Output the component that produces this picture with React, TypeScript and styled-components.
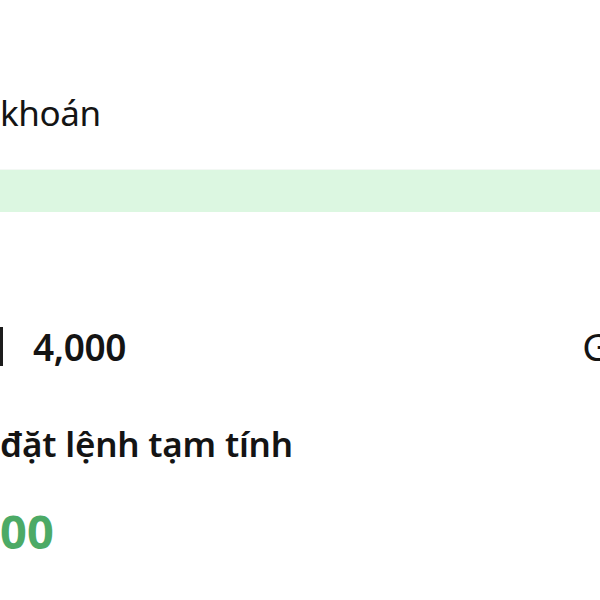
import React, { ReactElement } from 'react'
import styled, { createGlobalStyle } from 'styled-components'

const GlobalStyle = createGlobalStyle`
  body {
    margin: 0;
    overflow: hidden;
    background: #ffffff;
    font-family: 'Noto Sans', 'Open Sans', sans-serif;
    color: #141414;
  }
`
const Screen = styled.div`
  width: 600px;
  height: 600px;
  overflow: hidden;
  display: flex;
  flex-direction: column;
`
const AccountTitle = styled.h2`
  margin: 89px 0 0;
  font-size: 35px;
  font-weight: 400;
  line-height: 48px;
  letter-spacing: -0.4px;
  white-space: nowrap;
`
const Banner = styled.div`
  margin-top: 32px;
  height: 42px;
  background-color: #dcf7e1;
  border-top: 1px solid #f3f8f4;
`
const PriceRow = styled.div`
  display: flex;
  align-items: center;
  margin-top: 114px;
  height: 40px;
  white-space: nowrap;
`
const Divider = styled.span`
  display: block;
  width: 3px;
  height: 39px;
  margin-left: 0;
  background-color: #1c1c1c;
`
const PriceValue = styled.span`
  margin-left: 30px;
  font-size: 37px;
  font-weight: 600;
  letter-spacing: -0.4px;
`
const PriceLabel = styled.span`
  margin-left: auto;
  margin-right: -41px;
  font-size: 38px;
  font-weight: 400;
`
const SectionTitle = styled.h3`
  margin: 54px 0 0;
  font-size: 35px;
  font-weight: 600;
  line-height: 48px;
  letter-spacing: -0.2px;
  white-space: nowrap;
`
const Amount = styled.div`
  margin-top: 35px;
  font-size: 47px;
  font-weight: 700;
  line-height: 56px;
  color: #4caa66;
  white-space: nowrap;
`

const App = (): ReactElement => {
  return (
    <>
      <GlobalStyle />
      <Screen>
        <AccountTitle>khoán</AccountTitle>
        <Banner />
        <PriceRow>
          <Divider />
          <PriceValue>4,000</PriceValue>
          <PriceLabel>Giá</PriceLabel>
        </PriceRow>
        <SectionTitle>đặt lệnh tạm tính</SectionTitle>
        <Amount>00</Amount>
      </Screen>
    </>
  )
}

export default App
